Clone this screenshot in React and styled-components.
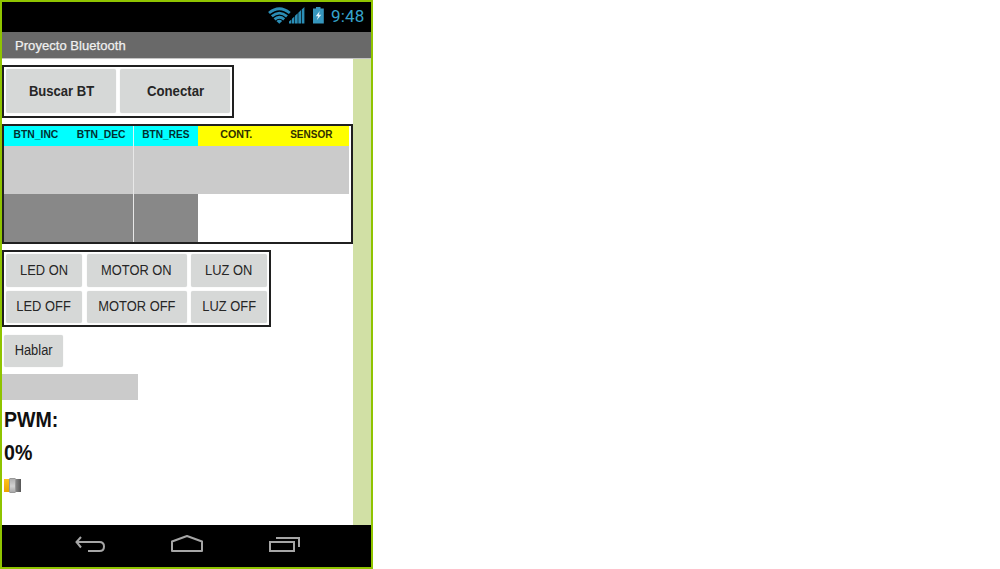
import React from "react";
import styled, { createGlobalStyle } from "styled-components";

const GlobalStyle = createGlobalStyle`
  * { box-sizing: border-box; }
  body { margin: 0; background: #fff; font-family: "Liberation Sans", Arial, sans-serif; }
`;

const Phone = styled.div`
  width: 373px;
  height: 569px;
  border: 2px solid #8fc400;
  display: flex;
  flex-direction: column;
  background: #fff;
  overflow: hidden;
`;

const StatusBar = styled.header`
  height: 30px;
  flex: none;
  background: #000;
  display: flex;
  justify-content: flex-end;
  padding-right: 6px;
`;

const StatusIcons = styled.svg`
  width: 66px;
  height: 28px;
  flex: none;
  margin-right: 1px;
`;

const Clock = styled.span`
  width: 34px;
  font: 17px/29px Roboto, sans-serif;
  letter-spacing: 0.2px;
  color: #36a3cc;
  white-space: nowrap;
`;

const TitleBar = styled.div`
  height: 27px;
  flex: none;
  background: #696969;
  border-bottom: 1px solid #c4c4c4;
  padding-left: 13px;
  font-size: 13px;
  line-height: 27px;
  letter-spacing: 0.05px;
  color: #f0f0f0;
  -webkit-text-stroke: 0.25px #f0f0f0;
`;

const Body = styled.div`
  height: 466px;
  flex: none;
  display: flex;
`;

const Screen = styled.main`
  width: 351px;
  padding-top: 6px;
  display: flex;
  flex-direction: column;
  align-items: flex-start;
`;

const ScrollGutter = styled.div`
  width: 18px;
  background: #d1e0a5;
`;

const Frame = styled.section`
  border: 2px solid #202020;
  width: ${(p) => p.$width}px;
  height: ${(p) => p.$height}px;
  margin-bottom: ${(p) => p.$after}px;
`;

const ConnectFrame = styled(Frame)`
  padding: 2px;
  display: flex;
  gap: 4px;
`;

const ControlFrame = styled(Frame)`
  padding: 2px;
  display: grid;
  grid-template-columns: 76px 100px 76px;
  grid-template-rows: 33px 32px;
  column-gap: 4.5px;
  row-gap: 4px;
`;

const Button = styled.button`
  width: ${(p) => (p.$width ? `${p.$width}px` : "auto")};
  height: ${(p) => (p.$height ? `${p.$height}px` : "auto")};
  margin: ${(p) => p.$margin || 0};
  padding: ${(p) => (p.$strong ? "0 0 2px 1px" : "0 0 2px")};
  border: 0;
  border-radius: 2px;
  background: #d6d8d7;
  box-shadow: 0 0 1px #d6d8d7;
  color: #262626;
  display: flex;
  align-items: center;
  justify-content: center;
  font-family: inherit;
  font-size: ${(p) => (p.$strong ? 15 : 14)}px;
  font-weight: ${(p) => (p.$strong ? 700 : 400)};
`;

const Condensed = styled.span`
  display: inline-block;
  white-space: nowrap;
  transform: scaleX(${(p) => p.$by});
  transform-origin: ${(p) => p.$origin || "center"};
`;

const DataTable = styled(Frame)`
  display: grid;
  grid-template-columns: 64.5px 64.5px 65px 75.5px 75.5px;
  grid-template-rows: 20px 48px 48px;
`;

const HeadCell = styled.div`
  background: ${(p) => p.$tone};
  border-left: ${(p) => (p.$divided ? "1px solid #d8f6f6" : "0")};
  color: ${(p) => (p.$tone === "#ffff00" ? "#303000" : "#003030")};
  font-size: 11.5px;
  font-weight: 700;
  line-height: 17px;
  text-align: center;
`;

const BandCell = styled.div`
  grid-column: ${(p) => p.$span};
  background: ${(p) => p.$tone};
  border-left: ${(p) => (p.$divided ? "1px solid #e8e8e8" : "0")};
`;

const TextField = styled.div`
  width: 136px;
  height: 26px;
  background: #cbcbcb;
`;

const Reading = styled.div`
  height: 33px;
  margin-top: ${(p) => p.$before || 0}px;
  padding-left: 2px;
  font-size: 22px;
  font-weight: 700;
  line-height: 33px;
  color: #101010;
`;

const Slider = styled.div`
  width: 17px;
  height: 14px;
  margin: 9px 0 0 2px;
  display: flex;
`;

const SliderTrack = styled.span`
  width: 5px;
  height: 13px;
  margin-top: 1px;
  background: linear-gradient(#ffc21a, #eaa400);
`;

const SliderThumb = styled.span`
  width: 7px;
  height: 15px;
  border: 1px solid #999;
  border-radius: 1px;
  background: linear-gradient(#b0b0b0, #d2d2d2 55%, #aaa);
`;

const SliderRest = styled.span`
  width: 5px;
  height: 13px;
  margin-top: 1px;
  background: linear-gradient(90deg, #858585, #555);
`;

const NavBar = styled.nav`
  height: 42px;
  flex: none;
  background: #000;
`;

const NavIcons = styled.svg`
  display: block;
  width: 369px;
  height: 42px;
`;

const CYAN = "#00ffff";
const YELLOW = "#ffff00";

const columns = [
  { name: "BTN_INC", tone: CYAN, by: 0.9 },
  { name: "BTN_DEC", tone: CYAN, by: 0.9 },
  { name: "BTN_RES", tone: CYAN, by: 0.88, divided: true },
  { name: "CONT.", tone: YELLOW, by: 0.93 },
  { name: "SENSOR", tone: YELLOW, by: 0.87 },
];

const controls = [
  { name: "LED ON", by: 0.92 },
  { name: "MOTOR ON", by: 0.92 },
  { name: "LUZ ON", by: 0.92 },
  { name: "LED OFF", by: 0.92 },
  { name: "MOTOR OFF", by: 0.92 },
  { name: "LUZ OFF", by: 0.92 },
];

export default function App() {
  return (
    <>
      <GlobalStyle />
      <Phone>
        <StatusBar>
          <StatusIcons viewBox="264 2 66 28">
            <g fill="none" stroke="#2b8db5" strokeWidth="2.8">
              <path d="M269 13Q279.3 4.6 289.8 13" />
              <path d="M271.8 16.3Q279.3 10 287 16.3" />
              <path d="M274.5 19.4Q279.3 15.2 284.2 19.4" />
            </g>
            <path d="M276.4 21Q279.3 18.6 282.2 21L279.3 23.8Z" fill="#2b8db5" />
            <path
              d="M289 23.5V21.6L291.4 19.4V23.5ZM292 23.5V18.7L294.4 16.5V23.5ZM295 23.5V15.8L297.7 13.2V23.5ZM298.3 23.5V12.7L301 10.1V23.5ZM301.7 23.5V9.5L304.4 7V23.5Z"
              fill="#2b8db5"
            />
            <path d="M313 8.5H316V7H320.5V8.5H323.8V23.5H313Z" fill="#3696bd" />
            <path d="M319.8 11L315.8 16.2H318.2L316.7 20.2L321.3 14.8H318.8Z" fill="#e6f4fa" />
          </StatusIcons>
          <Clock>9:48</Clock>
        </StatusBar>
        <TitleBar>Proyecto Bluetooth</TitleBar>
        <Body>
          <Screen>
            <ConnectFrame $width={232} $height={53} $after={6}>
              <Button $strong $width={110} $height={44}>
                <Condensed $by={0.87}>Buscar BT</Condensed>
              </Button>
              <Button $strong $width={110} $height={44}>
                <Condensed $by={0.88}>Conectar</Condensed>
              </Button>
            </ConnectFrame>
            <DataTable $width={351} $height={120} $after={6}>
              {columns.map((c) => (
                <HeadCell key={c.name} $tone={c.tone} $divided={c.divided}>
                  <Condensed $by={c.by}>{c.name}</Condensed>
                </HeadCell>
              ))}
              <BandCell $span="1 / 3" $tone="#cbcbcb" />
              <BandCell $span="3 / 6" $tone="#cbcbcb" $divided />
              <BandCell $span="1 / 3" $tone="#888888" />
              <BandCell $span="3 / 4" $tone="#888888" $divided />
            </DataTable>
            <ControlFrame $width={269} $height={77} $after={8}>
              {controls.map((c) => (
                <Button key={c.name}>
                  <Condensed $by={c.by}>{c.name}</Condensed>
                </Button>
              ))}
            </ControlFrame>
            <Button $width={59} $height={32} $margin="0 0 7px 2px">
              <Condensed $by={0.92}>Hablar</Condensed>
            </Button>
            <TextField />
            <Reading $before={3}>
              <Condensed $by={0.89} $origin="left">PWM:</Condensed>
            </Reading>
            <Reading>
              <Condensed $by={0.89} $origin="left">0%</Condensed>
            </Reading>
            <Slider>
              <SliderTrack />
              <SliderThumb />
              <SliderRest />
            </Slider>
          </Screen>
          <ScrollGutter />
        </Body>
        <NavBar>
          <NavIcons viewBox="2 525 369 42" fill="none" stroke="#a6a6a6" strokeWidth="2">
            <path d="M81 537L76.5 542L81 547.5M77 542H99.5Q104 542 104 546.5Q104 551 99.5 551H88" />
            <path d="M172 551V541.5L187 536L202 541.5V551Z" strokeLinejoin="round" />
            <path d="M270 542H294V551H270ZM276 538H299V547" />
          </NavIcons>
        </NavBar>
      </Phone>
    </>
  );
}
